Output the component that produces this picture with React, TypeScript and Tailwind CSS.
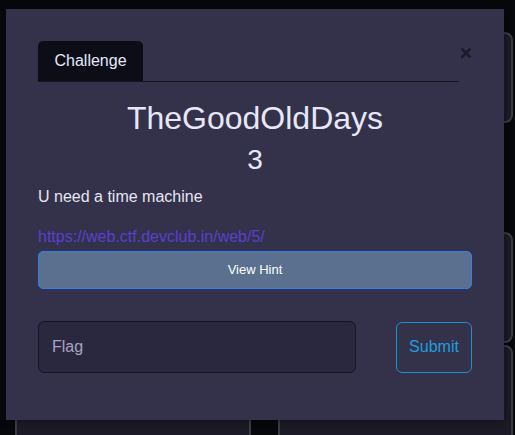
function BgCard({ className }: { className: string }) {
    return <div className={`rounded-lg border-2 border-[#3b3b42] bg-[#1b1a26] ${className}`} />;
}

export default function App() {
    return (
        <div className="relative h-[435px] w-[515px] overflow-hidden bg-[#07080b] font-['Liberation_Sans',Arial,sans-serif]">
            {/* cards of the page behind the modal */}
            <div className="grid grid-cols-[236px_235px] gap-x-[27px] pl-[15px]">
                <div className="flex flex-col">
                    <BgCard className="mt-[32px] h-[91px]" />
                    <BgCard className="mt-[109px] h-[111px]" />
                    <BgCard className="mt-[2px] h-[120px]" />
                </div>
                <div className="flex flex-col">
                    <BgCard className="mt-[32px] h-[91px]" />
                    <BgCard className="mt-[109px] h-[111px]" />
                    <BgCard className="mt-[2px] h-[120px]" />
                </div>
            </div>

            {/* modal */}
            <div className="absolute left-[6px] top-[9px] h-[411px] w-[498px] bg-[#33324a] px-8 pt-8 shadow-[0_0_6px_rgba(0,0,0,0.5)]">
                <div className="flex items-start">
                    <div className="flex-1 border-b border-[#15151f]">
                        <div className="inline-flex h-10 w-[105px] items-center justify-center rounded-t-[5px] bg-[#0d0d17] text-base text-[#e3eafc]">
                            Challenge
                        </div>
                    </div>
                    <button className="ml-[1px] mt-[6px] shrink-0 text-[#1c1b29]">
                        <svg width="12" height="12" viewBox="0 0 12 12" fill="none" stroke="currentColor" strokeWidth="2.6">
                            <path d="M1.5 1.5 L10.5 10.5 M10.5 1.5 L1.5 10.5" />
                        </svg>
                    </button>
                </div>

                <h2 className="mt-[17px] text-center text-[32px] leading-[38px] text-[#e8e7f9]">TheGoodOldDays</h2>
                <h3 className="mt-[6px] text-center text-[28px] leading-[34px] text-[#e8e7f9]">3</h3>

                <p className="mt-[8px] text-base leading-6 text-[#e6e5f3]">U need a time machine</p>
                <a href="#" className="mt-[16px] block text-base leading-6 text-[#5b3fcf]">
                    https://web.ctf.devclub.in/web/5/
                </a>
                <button className="mt-[2px] h-[38px] w-full rounded-[5px] border border-[#2f7ff0] bg-[#5b6f8e] text-[13px] text-white">
                    View Hint
                </button>

                <div className="mt-[32px] flex items-center justify-between">
                    <input
                        placeholder="Flag"
                        className="h-[52px] w-[318px] rounded-[6px] border border-[#17161f] bg-[#29283f] px-[13px] text-base text-[#a7a3c4] outline-none placeholder:text-[#a7a3c4]"
                    />
                    <button className="h-[51px] w-[76px] rounded-[6px] border border-[#1c8fcf] text-base text-[#1e9ddf]">
                        Submit
                    </button>
                </div>
            </div>
        </div>
    );
}
